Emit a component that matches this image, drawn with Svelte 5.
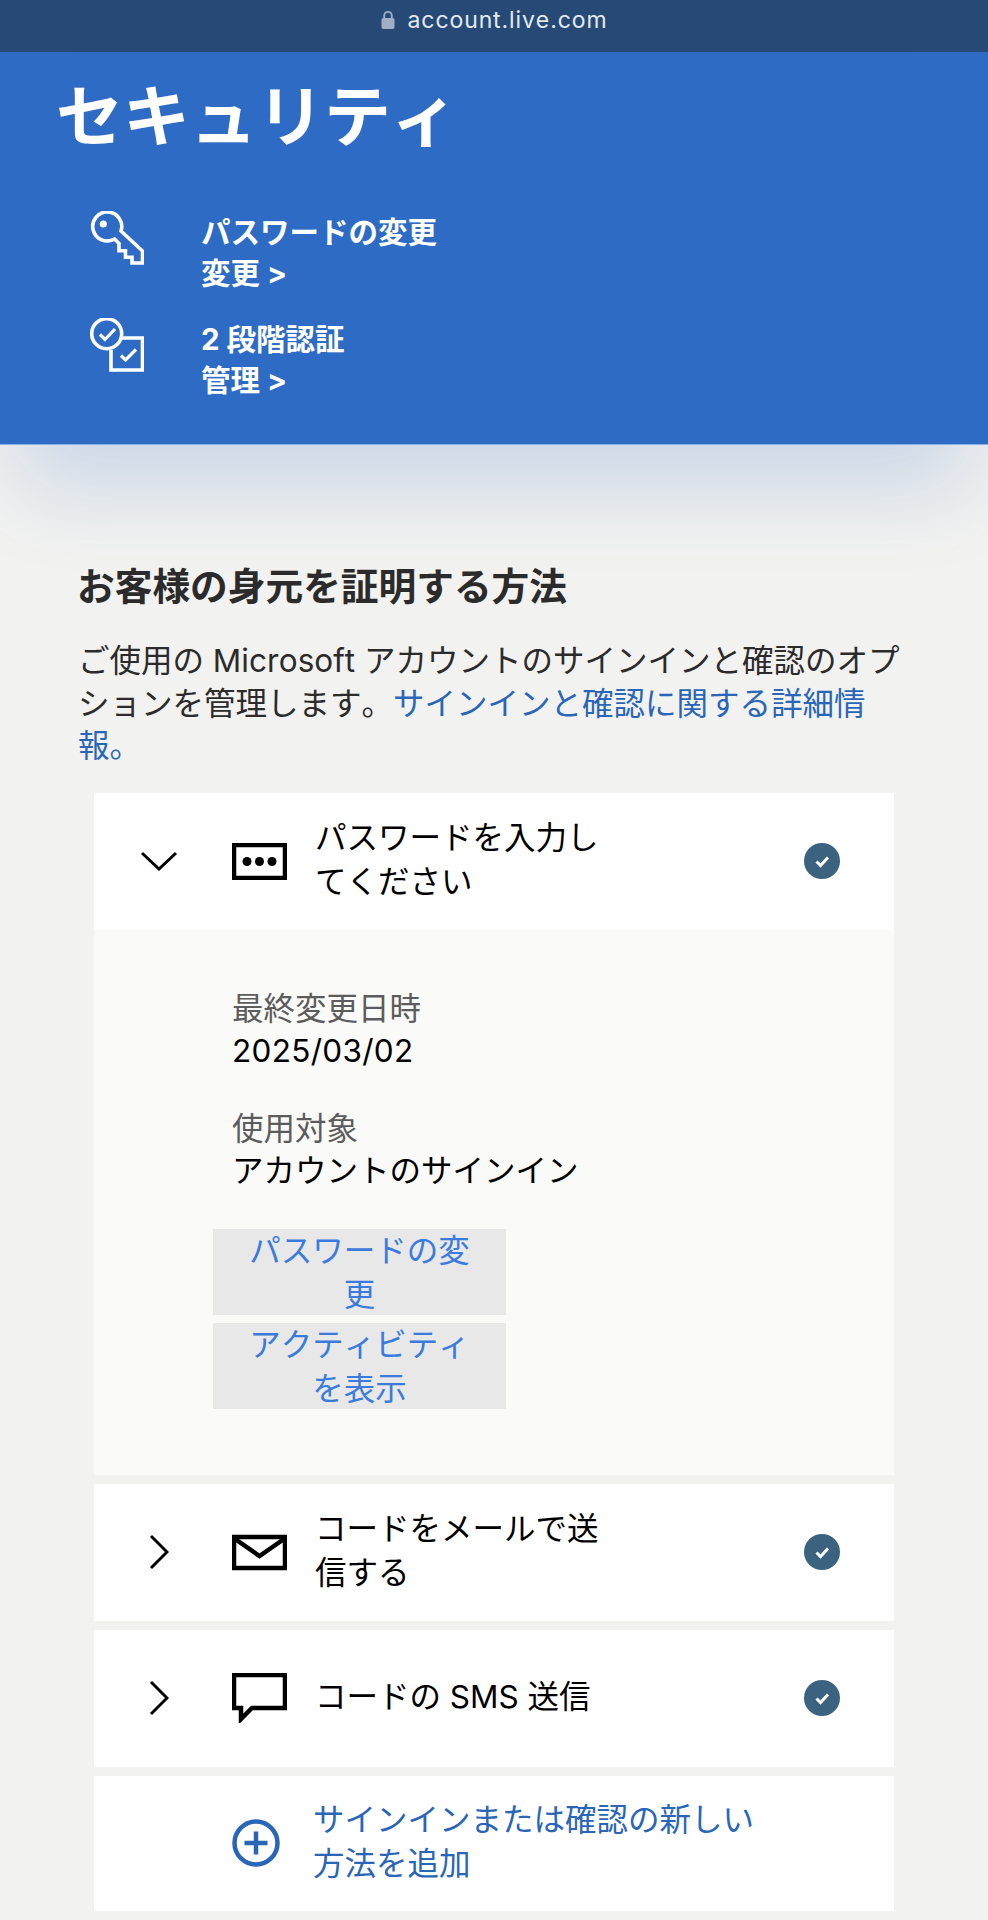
<script>
	const methods = [
		{ id: 'mail', lines: ['コードをメールで送', '信する'] },
		{ id: 'sms', lines: ['コードの SMS 送信'] }
	];
</script>

{#snippet done()}
	<svg class="done" viewBox="0 0 36 36" aria-hidden="true">
		<circle cx="18" cy="18" r="18" fill="#3b6380" />
		<path d="M12.5 18.5l4 4 7.5-8" fill="none" stroke="#fff" stroke-width="3" />
	</svg>
{/snippet}

<div class="page">
	<div class="urlbar">
		<svg class="lock" viewBox="0 0 14 19" aria-hidden="true">
			<path d="M3.2 9V5.6a3.8 3.8 0 0 1 7.6 0V9" fill="none" stroke="#9fb0c6" stroke-width="1.8" />
			<rect x="0.5" y="8" width="13" height="11" rx="2" fill="#9fb0c6" />
		</svg>
		<span>account.live.com</span>
	</div>

	<header class="hero">
		<h1>セキュリティ</h1>
		<div class="hero-link">
			<svg viewBox="0 0 54 54" aria-hidden="true">
				<path d="M24.5 28A14.5 14.5 0 1 1 31 20L52.5 40V52H42V46.3H35.5V39.7H29V32.5Z" fill="none" stroke="#fff" stroke-width="3.6" />
				<circle cx="13.3" cy="13" r="3.6" fill="#fff" />
			</svg>
			<div class="hero-text">
				<div>パスワードの変更</div>
				<div>変更 &gt;</div>
			</div>
		</div>
		<div class="hero-link">
			<svg viewBox="0 0 54 54" aria-hidden="true">
				<circle cx="16.7" cy="15.7" r="15" fill="none" stroke="#fff" stroke-width="3.6" />
				<path d="M31.5 20H52.5V52H21V32" fill="none" stroke="#fff" stroke-width="3.6" />
				<path d="M10 16.5l5 5 10-10.5M31 37.5l4.5 4.5 10.5-10.5" fill="none" stroke="#fff" stroke-width="3.2" />
			</svg>
			<div class="hero-text">
				<div>2 段階認証</div>
				<div>管理 &gt;</div>
			</div>
		</div>
	</header>

	<main>
		<h2>お客様の身元を証明する方法</h2>
		<p class="intro">
			ご使用の Microsoft アカウントのサインインと確認のオプションを管理します。<a href="#more">サインインと確認に関する詳細情報。</a>
		</p>

		<div class="cards">
			<section>
				<div class="row">
					<svg class="chev" viewBox="0 0 38 20" aria-hidden="true">
						<path d="M2 2l17 16L36 2" fill="none" stroke="#000" stroke-width="3" />
					</svg>
					<svg class="method" viewBox="0 0 55 37" aria-hidden="true">
						<rect x="2" y="2" width="51" height="33" fill="none" stroke="#000" stroke-width="4.5" />
						<circle cx="15" cy="18.5" r="4.5" />
						<circle cx="27.5" cy="18.5" r="4.5" />
						<circle cx="40" cy="18.5" r="4.5" />
					</svg>
					<div class="label">パスワードを入力し<br />てください</div>
					{@render done()}
				</div>
				<div class="details">
					<div class="field">
						<div class="key">最終変更日時</div>
						<div class="date">2025/03/02</div>
					</div>
					<div class="field">
						<div class="key">使用対象</div>
						<div>アカウントのサインイン</div>
					</div>
					<div class="actions">
						<button>パスワードの変<br />更</button>
						<button>アクティビティ<br />を表示</button>
					</div>
				</div>
			</section>

			{#each methods as m}
				<section>
					<div class="row">
						<svg class="chev right" viewBox="0 0 20 36" aria-hidden="true">
							<path d="M2 2l16 16L2 34" fill="none" stroke="#000" stroke-width="3" />
						</svg>
						{#if m.id === 'mail'}
							<svg class="method" viewBox="0 0 55 35" aria-hidden="true">
								<rect x="2" y="2" width="51" height="31" fill="none" stroke="#000" stroke-width="4.5" />
								<path d="M3 4l24.5 17L52 4" fill="none" stroke="#000" stroke-width="4.5" />
							</svg>
						{:else}
							<svg class="method tall" viewBox="0 0 55 50" aria-hidden="true">
								<path d="M2 2H53V35H20L9 46V35H2Z" fill="none" stroke="#000" stroke-width="4.5" />
							</svg>
						{/if}
						<div class="label">
							{#each m.lines as line, i}{#if i > 0}<br />{/if}{line}{/each}
						</div>
						{@render done()}
					</div>
				</section>
			{/each}

			<section>
				<div class="row add">
					<span class="chev-gap"></span>
					<svg class="method plus" viewBox="0 0 48 48" aria-hidden="true">
						<circle cx="24" cy="24" r="21.5" fill="none" stroke="#2a66b8" stroke-width="4.5" />
						<path d="M24 12.5v23M12.5 24h23" fill="none" stroke="#2a66b8" stroke-width="4.5" />
					</svg>
					<div class="label">サインインまたは確認の新しい<br />方法を追加</div>
				</div>
			</section>
		</div>
	</main>
</div>

<style>
	:global(body) {
		margin: 0;
		background: #f2f2f0;
	}

	.page {
		width: 988px;
		height: 1920px;
		overflow: hidden;
		background: #f2f2f0;
		font-family: Inter, "Noto Sans CJK JP", sans-serif;
		font-kerning: none;
		color: #000;
	}

	.urlbar {
		height: 52px;
		background: #264a75;
		color: #e3e9f0;
		font-family: Inter, sans-serif;
		font-size: 23px;
		letter-spacing: 0.9px;
		display: flex;
		justify-content: center;
		gap: 13px;
		padding-top: 6px;
		box-sizing: border-box;
	}

	.lock {
		width: 14px;
		height: 19px;
		margin-top: 4px;
	}

	.hero {
		height: 393px;
		box-sizing: border-box;
		background: #2e6bc4;
		border-bottom: 1px solid #8ab0e6;
		color: #fff;
		padding: 22px 0 0 56px;
		position: relative;
		box-shadow: 0 62px 80px -20px rgba(46, 107, 196, 0.2);
	}

	h1 {
		margin: 0 0 51px;
		font-size: 67px;
		line-height: 86px;
		font-weight: 700;
	}

	.hero-link {
		display: flex;
		align-items: flex-start;
		gap: 57px;
		padding-left: 34px;
		height: 107px;
	}

	.hero-link svg {
		width: 54px;
		height: 54px;
		flex: none;
	}

	.hero-text {
		font-size: 29.5px;
		line-height: 41px;
		font-weight: 700;
		margin-top: 1px;
	}

	main {
		padding: 117px 0 0;
	}

	h2 {
		margin: 0 0 0 77px;
		font-size: 37.7px;
		line-height: 48px;
		font-weight: 700;
		color: #2b2b2b;
	}

	.intro {
		margin: 30px 0 0 78px;
		width: 836px;
		font-size: 31.5px;
		line-height: 42.5px;
		color: #2b2b2b;
	}

	.intro a {
		color: #2a66b8;
		text-decoration: none;
	}

	.cards {
		margin: 25px 94px 0;
		display: flex;
		flex-direction: column;
		gap: 9px;
	}

	section {
		background: #fff;
	}

	.row {
		height: 137px;
		display: flex;
		align-items: center;
		font-size: 31.5px;
		line-height: 44px;
		position: relative;
	}

	.row.add {
		height: 135px;
	}

	.chev {
		width: 38px;
		height: 20px;
		margin-left: 46px;
		margin-right: 54px;
		flex: none;
	}

	.chev.right {
		width: 20px;
		height: 36px;
		margin-left: 55px;
		margin-right: 63px;
	}

	.chev-gap {
		width: 138px;
		flex: none;
	}

	.method {
		width: 55px;
		height: 37px;
		flex: none;
	}

	.method.tall {
		height: 50px;
	}

	.method.plus {
		width: 48px;
		height: 48px;
		margin-right: 33px;
	}

	.label {
		margin-left: 28px;
		flex: 1;
		margin-top: -3px;
	}

	.add .label {
		margin-left: 0;
		color: #2a66b8;
	}

	.done {
		width: 36px;
		height: 36px;
		flex: none;
		margin-right: 54px;
	}

	.details {
		background: #fafaf8;
		height: 545px;
		box-sizing: border-box;
		padding: 58px 0 0 138px;
		font-size: 31.5px;
		line-height: 42.5px;
	}

	.date {
		letter-spacing: 0.3px;
	}

	.field {
		margin-bottom: 35px;
	}

	.key {
		color: #5c5c5c;
	}

	.actions {
		margin: 36px 0 0 -19px;
		display: flex;
		flex-direction: column;
		gap: 8px;
		width: 293px;
	}

	button {
		border: 0;
		padding: 0;
		height: 86px;
		background: #e8e8e8;
		color: #3a7bdc;
		font: inherit;
		line-height: 44px;
	}
</style>
